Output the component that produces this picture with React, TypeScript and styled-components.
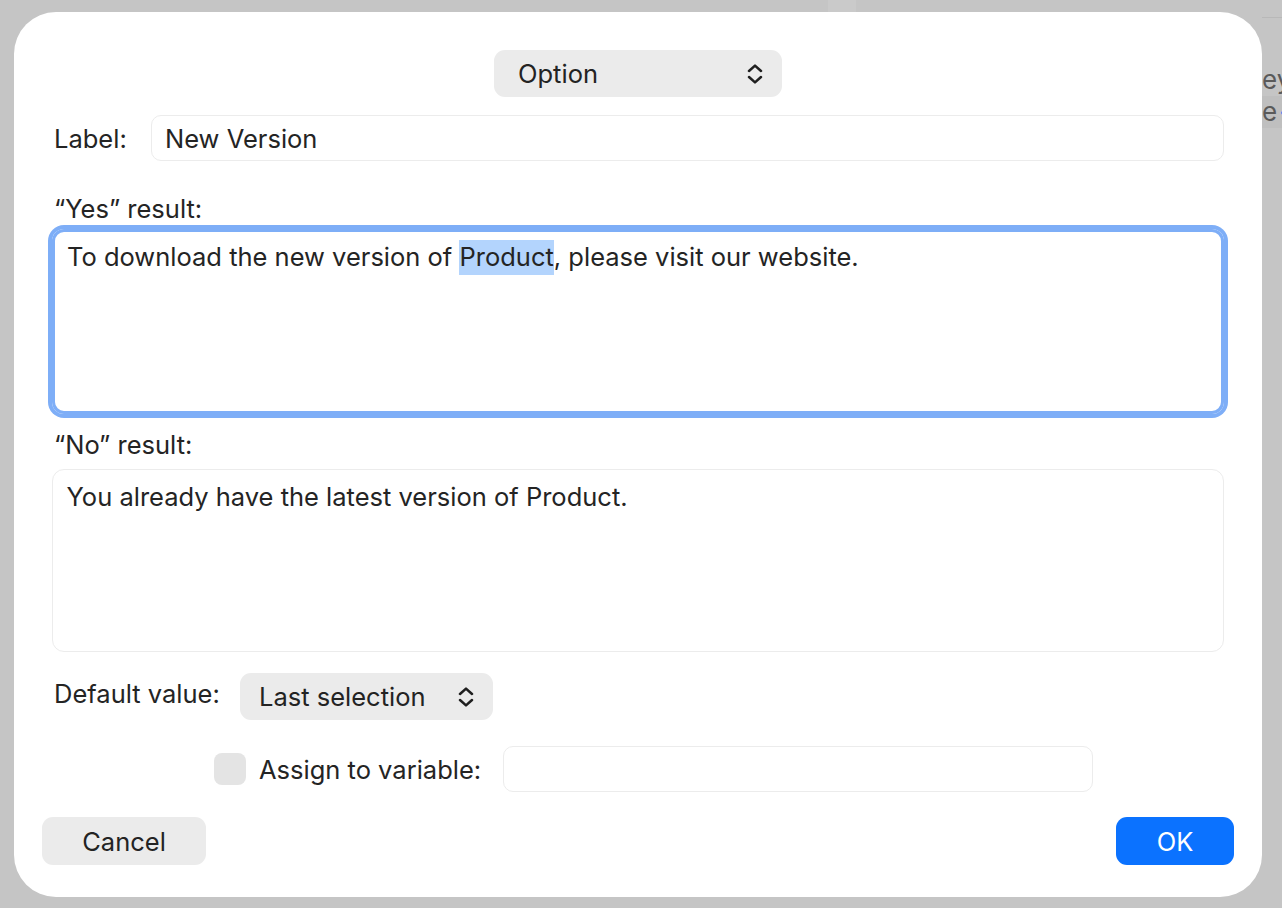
import React from "react";
import styled, { createGlobalStyle } from "styled-components";

const Global = createGlobalStyle`
  html, body {
    margin: 0;
    padding: 0;
    background: #c5c5c5;
    overflow: hidden;
  }
  body {
    font-family: Inter, "Noto Sans", "Liberation Sans", sans-serif;
    -webkit-font-smoothing: antialiased;
    color: #242424;
  }
  #root {
    width: 1282px;
    height: 908px;
  }
`;

const Screen = styled.div`
  width: 1282px;
  height: 908px;
  display: flex;
  flex-direction: column;
  background: #c5c5c5;
  overflow: hidden;
`;

const TopStrip = styled.div`
  height: 12px;
  flex: none;
  display: flex;
`;

const TabGhost = styled.div`
  margin-left: 828px;
  width: 28px;
  background: #cacaca;
`;

const Body = styled.div`
  flex: 1;
  min-height: 0;
  display: flex;
  padding-left: 14px;
`;

const Peek = styled.div`
  flex: 1;
  min-width: 0;
  overflow: hidden;
  display: flex;
  flex-direction: column;
  font-size: 26px;
  color: #5a5a5a;
  white-space: nowrap;
`;

const PeekRule = styled.div`
  margin-top: 5px;
  height: 1px;
  background: #b8b8b8;
`;

const PeekLine = styled.div<{ $shift: number; $band?: boolean; $mt?: number }>`
  margin-top: ${(p) => p.$mt ?? 0}px;
  height: 32px;
  line-height: 32px;
  padding-left: ${(p) => p.$shift}px;
  background: ${(p) => (p.$band ? "#bfbfbf" : "transparent")};
`;

const Dot = styled.span`
  color: #3f86e8;
  font-size: 14px;
  vertical-align: 4px;
  margin: 0 2px;
`;

const Dialog = styled.div`
  width: 1248px;
  height: 885px;
  flex: none;
  box-sizing: border-box;
  background: #ffffff;
  border-radius: 42px;
  padding: 38px 28px 33px;
  display: flex;
  flex-direction: column;
  font-size: 25.5px;
`;

const Form = styled.div`
  display: flex;
  flex-direction: column;
  margin: 0 10px;
`;

const Centered = styled.div`
  display: flex;
  justify-content: center;
`;

const Popup = styled.div<{ $width: number; $padL: number }>`
  box-sizing: border-box;
  width: ${(p) => p.$width}px;
  height: 47px;
  border-radius: 11px;
  background: #ebebeb;
  display: flex;
  align-items: center;
  justify-content: space-between;
  padding: 0 19px 0 ${(p) => p.$padL}px;
  color: #232323;
`;

const Row = styled.div<{ $mt: number }>`
  display: flex;
  align-items: center;
  margin-top: ${(p) => p.$mt}px;
`;

const FieldLabel = styled.div<{ $width: number; $lift?: number }>`
  flex: none;
  width: ${(p) => p.$width}px;
  padding-left: 2px;
  box-sizing: border-box;
  margin-bottom: ${(p) => (p.$lift ?? 0) * 2}px;
`;

const TextField = styled.div<{ $width?: number }>`
  box-sizing: border-box;
  ${(p) => (p.$width ? `width: ${p.$width}px; flex: none;` : "flex: 1;")}
  height: 46px;
  border: 1.5px solid #ececec;
  border-radius: 10px;
  display: flex;
  align-items: center;
  padding: 0 13px;
`;

const SectionLabel = styled.div<{ $mt: number }>`
  margin-top: ${(p) => p.$mt}px;
  line-height: 30px;
  padding-left: 2px;
`;

const TextArea = styled.div<{ $mt: number; $focused?: boolean }>`
  box-sizing: border-box;
  margin-top: ${(p) => p.$mt}px;
  height: ${(p) => (p.$focused ? 185 : 183)}px;
  border-radius: 12px;
  padding: ${(p) => (p.$focused ? 9 : 10.5)}px 12px;
  line-height: 32px;
  border: ${(p) => (p.$focused ? "3px solid #7eaef7" : "1.5px solid #ececec")};
  box-shadow: ${(p) => (p.$focused ? "0 0 0 4px #7eaef7" : "none")};
  padding-left: ${(p) => (p.$focused ? 12 : 13.5)}px;
`;

const Selected = styled.span`
  background: #b3d4fd;
  padding: 1px 0 3px;
`;

const Checkbox = styled.div`
  flex: none;
  width: 32px;
  height: 32px;
  border-radius: 8px;
  background: #e4e4e4;
  margin-left: 162px;
`;

const AssignLabel = styled.div`
  flex: none;
  width: 257px;
  padding-left: 13px;
  box-sizing: border-box;
  white-space: nowrap;
`;

const ButtonRow = styled.div`
  display: flex;
  justify-content: space-between;
  align-items: center;
  margin-top: 25px;
`;

const Button = styled.button<{ $primary?: boolean; $width: number }>`
  width: ${(p) => p.$width}px;
  height: 48px;
  border: none;
  border-radius: 11px;
  font: inherit;
  font-size: 25.5px;
  background: ${(p) => (p.$primary ? "#0b72ff" : "#ebebeb")};
  color: ${(p) => (p.$primary ? "#ffffff" : "#232323")};
  padding: 0;
  cursor: default;
`;

const Chevrons = () => (
  <svg width="16" height="20" viewBox="0 0 16 20" fill="none">
    <path
      d="M2 7 L8 1.6 L14 7 M2 13 L8 18.4 L14 13"
      stroke="#1f1f1f"
      strokeWidth="2.5"
      strokeLinecap="round"
      strokeLinejoin="round"
    />
  </svg>
);

export default function App() {
  return (
    <>
      <Global />
      <Screen>
        <TopStrip>
          <TabGhost />
        </TopStrip>
        <Body>
          <Dialog>
            <Centered>
              <Popup $width={288} $padL={24}>
                Option
                <Chevrons />
              </Popup>
            </Centered>
            <Form>
              <Row $mt={18}>
                <FieldLabel $width={99}>Label:</FieldLabel>
                <TextField>New Version</TextField>
              </Row>
              <SectionLabel $mt={33}>“Yes” result:</SectionLabel>
              <TextArea $mt={5} $focused>
                To download the new version of <Selected>Product</Selected>, please visit our website.
              </TextArea>
              <SectionLabel $mt={16}>“No” result:</SectionLabel>
              <TextArea $mt={9}>You already have the latest version of Product.</TextArea>
              <Row $mt={21}>
                <FieldLabel $width={188} $lift={3}>
                  Default value:
                </FieldLabel>
                <Popup $width={253} $padL={19}>
                  Last selection
                  <Chevrons />
                </Popup>
              </Row>
              <Row $mt={26}>
                <Checkbox />
                <AssignLabel>Assign to variable:</AssignLabel>
                <TextField $width={590} />
              </Row>
            </Form>
            <ButtonRow>
              <Button $width={164}>Cancel</Button>
              <Button $width={118} $primary>
                OK
              </Button>
            </ButtonRow>
          </Dialog>
          <Peek>
            <PeekRule />
            <PeekLine $shift={-2} $mt={46}>
              ey
            </PeekLine>
            <PeekLine $shift={-5} $band>
              e<Dot>•</Dot>r
            </PeekLine>
          </Peek>
        </Body>
      </Screen>
    </>
  );
}
